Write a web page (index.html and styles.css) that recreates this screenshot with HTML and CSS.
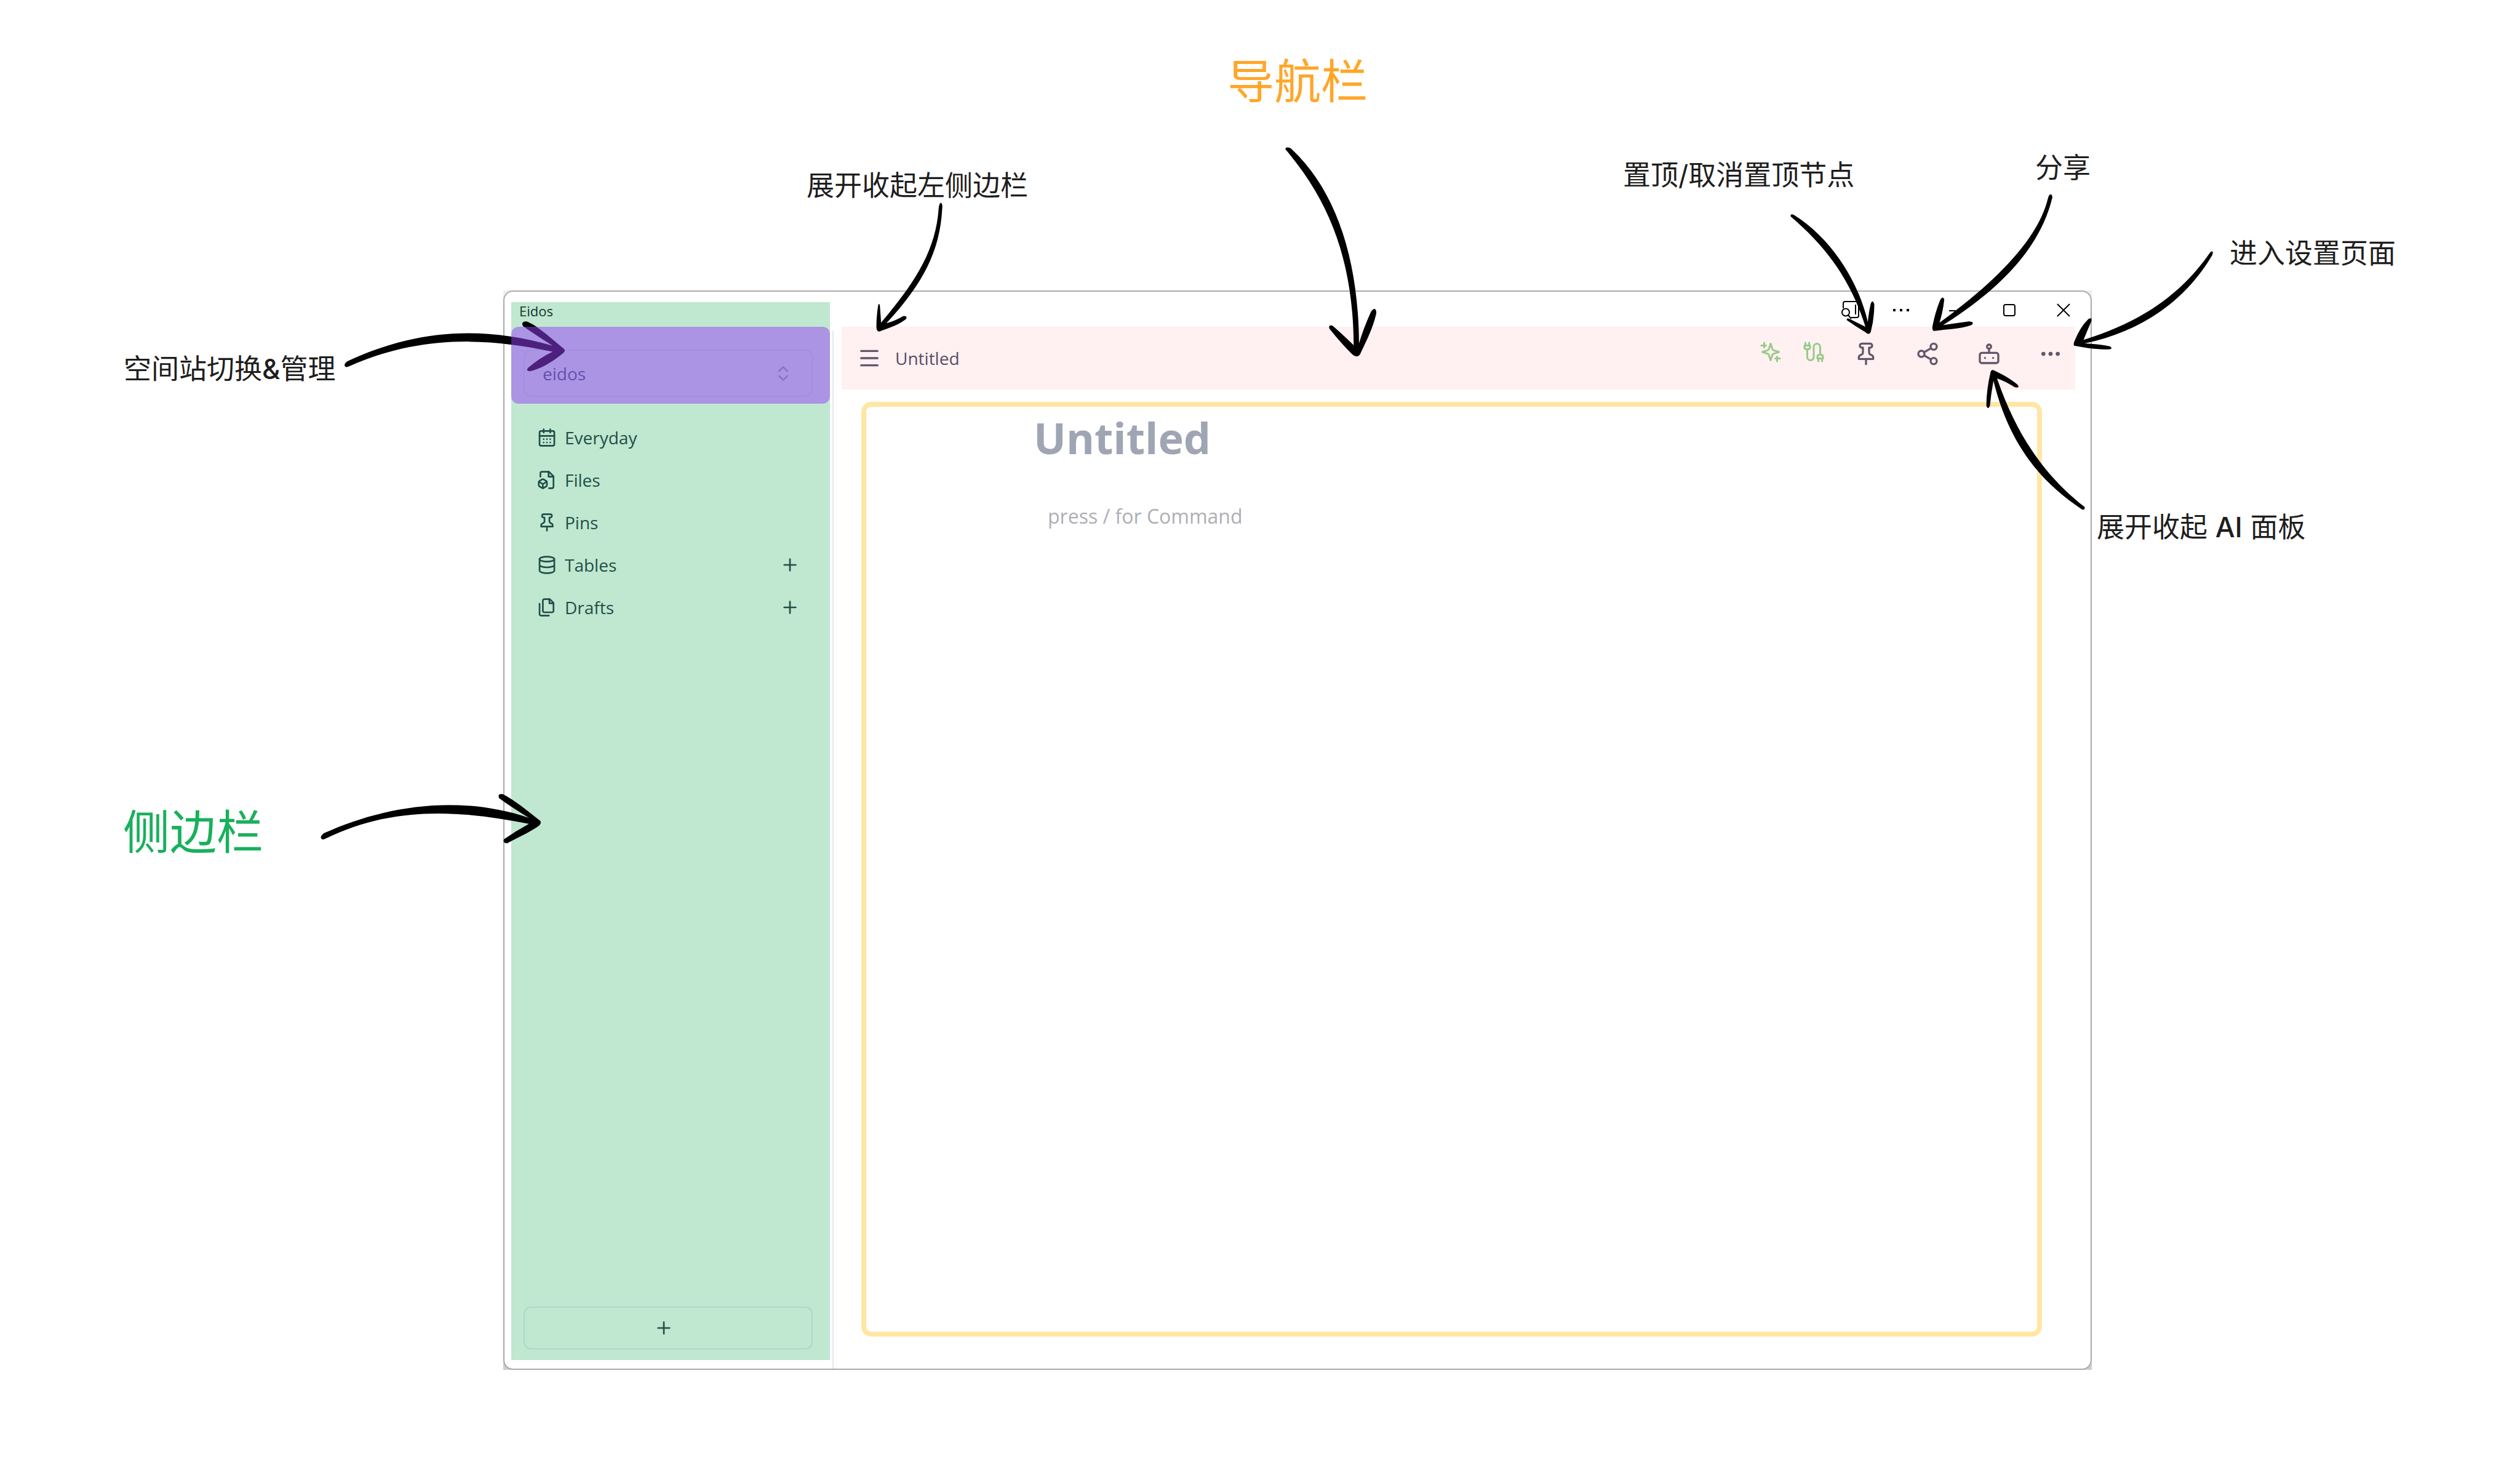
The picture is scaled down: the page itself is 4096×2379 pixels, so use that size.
FILE: index.html
```html
<!DOCTYPE html>
<html lang="zh-CN">
<head>
<meta charset="utf-8">
<title>Eidos</title>
<link rel="stylesheet" href="styles.css">
</head>
<body>
<div class="canvas">
  <div class="frame">
    <div class="window">
      <aside class="sidebar">
        <div class="app-name">Eidos</div>
        <div class="switcher">
          <button class="space-select" type="button">
            <span>eidos</span>
            <svg class="icon" viewBox="0 0 24 24"><path d="m7 15 5 5 5-5M7 9l5-5 5 5"/></svg>
          </button>
        </div>
        <nav class="menu">
          <div class="menu-row">
            <a class="menu-link" href="#everyday"><svg class="icon" viewBox="0 0 24 24"><rect x="3" y="4" width="18" height="18" rx="2"/><path d="M16 2v4M8 2v4M3 10h18M8 14h.01M12 14h.01M16 14h.01M8 18h.01M12 18h.01M16 18h.01"/></svg>Everyday</a>
          </div>
          <div class="menu-row">
            <a class="menu-link" href="#files"><svg class="icon" viewBox="0 0 24 24"><path d="M14.500 22H18a2 2 0 0 0 2-2V7.500L14.500 2H6a2 2 0 0 0-2 2v4"/><path d="M14 2v6h6"/><path d="M2.970 13.120c-.6.36-.97 1.020-.97 1.740v3.280c0 .72.37 1.380.97 1.740l3 1.830c.63.39 1.430.39 2.060 0l3-1.830c.6-.36.97-1.020.97-1.740v-3.280c0-.72-.37-1.380-.97-1.740l-3-1.830a1.970 1.970 0 0 0-2.060 0l-3 1.830Z"/><path d="m7 17-4.740-2.850M7 17l4.740-2.850M7 17v5"/></svg>Files</a>
          </div>
          <div class="menu-row">
            <a class="menu-link" href="#pins"><svg class="icon" viewBox="0 0 24 24"><path d="M12 17v5M5 17h14v-1.760a2 2 0 0 0-1.110-1.790l-1.780-.9A2 2 0 0 1 15 10.760V6h1a2 2 0 0 0 0-4H8a2 2 0 0 0 0 4h1v4.760a2 2 0 0 1-1.110 1.790l-1.780.9A2 2 0 0 0 5 15.240Z"/></svg>Pins</a>
          </div>
          <div class="menu-row">
            <a class="menu-link" href="#tables"><svg class="icon" viewBox="0 0 24 24"><ellipse cx="12" cy="5" rx="9" ry="3"/><path d="M3 5v14a9 3 0 0 0 18 0V5M3 12a9 3 0 0 0 18 0"/></svg>Tables</a>
            <button class="add" type="button" aria-label="Add table"><svg class="icon" viewBox="0 0 24 24"><path d="M5 12h14M12 5v14"/></svg></button>
          </div>
          <div class="menu-row">
            <a class="menu-link" href="#drafts"><svg class="icon" viewBox="0 0 24 24"><path d="M15.500 2H8.600c-.4 0-.8.2-1.100.5-.3.3-.5.7-.5 1.100v12.800c0 .4.2.8.5 1.100.3.3.7.5 1.100.5h9.800c.4 0 .8-.2 1.100-.5.3-.3.5-.7.5-1.100V6.500L15.500 2z"/><path d="M3 7.600v12.800c0 .4.2.8.5 1.100.3.3.7.5 1.100.5h9.800M15 2v5h5"/></svg>Drafts</a>
            <button class="add" type="button" aria-label="Add draft"><svg class="icon" viewBox="0 0 24 24"><path d="M5 12h14M12 5v14"/></svg></button>
          </div>
        </nav>
        <button class="new-node" type="button" aria-label="New"><svg class="icon" viewBox="0 0 24 24"><path d="M5 12h14M12 5v14"/></svg></button>
      </aside>
      <div class="divider"></div>
      <main class="main">
        <div class="titlebar">
          <button class="win-btn win-btn-search" type="button" aria-label="Search"><svg viewBox="0 0 30 30"><path d="M3 12V4a3 3 0 0 1 3-3h19a3 3 0 0 1 3 3v20a3 3 0 0 1-3 3h-9M23 6v16"/><circle cx="7" cy="18.500" r="6"/><path d="m11 23 5 6"/></svg></button>
          <button class="win-btn" type="button" aria-label="More"><svg viewBox="0 0 30 30"><path class="solid" d="M2 13h4v4H2zM13 13h4v4h-4zM24 13h4v4h-4z"/></svg></button>
          <button class="win-btn" type="button" aria-label="Minimize"><svg viewBox="0 0 30 30"><path d="M5 16h20"/></svg></button>
          <button class="win-btn" type="button" aria-label="Maximize"><svg viewBox="0 0 30 30"><rect x="6" y="6" width="18" height="18" rx="3"/></svg></button>
          <button class="win-btn" type="button" aria-label="Close"><svg viewBox="0 0 30 30"><path d="m5 5 20 20M25 5 5 25"/></svg></button>
        </div>
        <header class="navbar">
          <button class="nav-btn" type="button" aria-label="Toggle sidebar"><svg class="icon" viewBox="0 0 24 24"><path d="M4 5h16M4 12h16M4 19h16"/></svg></button>
          <span class="crumb">Untitled</span>
          <div class="actions">
            <button class="status-btn" type="button" aria-label="AI"><svg class="icon" viewBox="0 0 24 24"><path d="m12 3-1.912 5.813a2 2 0 0 1-1.275 1.275L3 12l5.813 1.912a2 2 0 0 1 1.275 1.275L12 21l1.912-5.813a2 2 0 0 1 1.275-1.275L21 12l-5.813-1.912a2 2 0 0 1-1.275-1.275L12 3ZM5 2v5M19 17v5M2 5h5M17 19h5"/></svg></button>
            <button class="status-btn" type="button" aria-label="Connection"><svg class="icon" viewBox="0 0 24 24"><path d="M4 9a2 2 0 0 1-2-2V5h6v2a2 2 0 0 1-2 2ZM3 5V2M7 5V2M19 15V6.500a3.500 3.500 0 0 0-7 0v11a3.500 3.500 0 0 1-7 0V9M17 22v-3M21 22v-3M22 19h-6v-2a2 2 0 0 1 2-2h2a2 2 0 0 1 2 2Z"/></svg></button>
            <button class="nav-btn" type="button" aria-label="Pin"><svg class="icon" viewBox="0 0 24 24"><path d="M12 17v5M5 17h14v-1.760a2 2 0 0 0-1.110-1.790l-1.780-.9A2 2 0 0 1 15 10.760V6h1a2 2 0 0 0 0-4H8a2 2 0 0 0 0 4h1v4.760a2 2 0 0 1-1.110 1.790l-1.780.9A2 2 0 0 0 5 15.240Z"/></svg></button>
            <button class="nav-btn" type="button" aria-label="Share"><svg class="icon" viewBox="0 0 24 24"><circle cx="18" cy="5" r="3"/><circle cx="6" cy="12" r="3"/><circle cx="18" cy="19" r="3"/><path d="m8.590 13.510 6.830 3.980M15.410 6.510l-6.820 3.980"/></svg></button>
            <button class="nav-btn" type="button" aria-label="AI panel"><svg class="icon" viewBox="0 0 24 24"><rect x="3" y="11" width="18" height="10" rx="2"/><circle cx="12" cy="5" r="2"/><path d="M12 7v4M8 16h.01M16 16h.01"/></svg></button>
            <button class="nav-btn" type="button" aria-label="Settings"><svg class="icon" viewBox="0 0 24 24"><circle cx="12" cy="12" r="1"/><circle cx="19" cy="12" r="1"/><circle cx="5" cy="12" r="1"/></svg></button>
          </div>
        </header>
        <section class="editor">
          <h1 class="doc-title">Untitled</h1>
          <textarea class="doc-body" rows="1" aria-label="Document body" placeholder="press / for Command"></textarea>
        </section>
      </main>
    </div>
  </div>

  <svg class="arrows" viewBox="0 0 4250 2468" aria-hidden="true">
    <path d="M2168 252C2167 248 2173 247 2178 251C2250 318 2291 430 2292 579Q2299 555 2312 526C2317 518 2322 520 2321 529C2316 552 2304 576 2294 597Q2289 605 2280 597Q2262 579 2242 554Q2240 547 2247 549Q2260 560 2283 582C2282 440 2243 340 2168 252Z"/>
    <path d="M1587 342Q1590 344 1589 352C1585 430 1550 485 1495 545Q1510 541 1523 533Q1531 532 1528 538C1517 547 1500 553 1483 559Q1478 559 1478 550Q1478 534 1481 515Q1483 509 1484 516L1486 544C1540 480 1578 425 1583 352Q1584 342 1587 342Z"/>
    <path d="M3020 365Q3019 360 3025 362C3090 402 3136 478 3150 543Q3152 525 3155 512Q3158 504 3161 513Q3161 538 3155 560Q3152 566 3146 560Q3129 550 3115 540Q3113 535 3120 538L3146 551C3122 474 3082 418 3020 365Z"/>
    <path d="M3459 328Q3462 329 3461 334C3440 420 3370 490 3277 548Q3299 545 3321 542Q3331 543 3325 548C3305 555 3282 555 3262 558Q3257 557 3260 546Q3264 526 3272 506Q3277 498 3279 505Q3277 525 3271 544C3362 478 3437 405 3454 334Q3456 327 3459 328Z"/>
    <path d="M3731 424Q3733 424 3731 430C3690 500 3620 557 3516 579Q3540 580 3558 584Q3565 588 3556 589C3535 590 3515 586 3498 583Q3496 580 3500 572Q3508 552 3522 538Q3529 534 3527 542Q3520 558 3514 573C3605 545 3675 500 3725 429Q3729 423 3731 424Z"/>
    <path d="M3510 858Q3516 862 3516 855C3445 800 3400 730 3368 638Q3381 642 3398 653Q3408 655 3402 648C3390 638 3375 630 3362 624Q3358 623 3357 628Q3350 658 3350 684Q3353 692 3356 684Q3358 663 3362 642C3385 735 3430 805 3510 858Z"/>
    <path d="M582 618Q579 614 586 609C690 561 800 545 932 583Q905 566 882 550Q878 542 888 542C905 548 930 571 951 588Q955 592 949 596C928 613 910 622 894 626Q885 625 892 619Q911 603 932 593C820 569 710 565 590 617Q584 620 582 618Z"/>
    <path d="M542 1414Q539 1411 546 1405C645 1360 770 1338 892 1379Q861 1360 842 1346Q838 1338 848 1339C868 1349 891 1368 911 1384Q914 1388 908 1393C890 1405 872 1413 855 1422Q847 1421 850 1415Q870 1401 892 1389C780 1367 665 1357 549 1414Q544 1417 542 1414Z"/>
  </svg>

  <p class="note note-lg note-navbar">导航栏</p>
  <p class="note note-lg note-sidebar">侧边栏</p>
  <p class="note note-space">空间站切换<span class="latin">&amp;</span>管理</p>
  <p class="note note-toggle">展开收起左侧边栏</p>
  <p class="note note-pin">置顶/取消置顶节点</p>
  <p class="note note-share">分享</p>
  <p class="note note-settings">进入设置页面</p>
  <p class="note note-ai">展开收起 <span class="latin">AI</span> 面板</p>
</div>
</body>
</html>
```
FILE: styles.css
```css
* { box-sizing: border-box; }

body {
  margin: 0;
  background: #fff;
  font-family: "Open Sans", "Noto Sans", "Noto Sans CJK SC", sans-serif;
}

button {
  margin: 0;
  padding: 0;
  border: 0;
  background: none;
  color: inherit;
  font: inherit;
}

.icon {
  display: block;
  width: 32px;
  height: 32px;
  flex: none;
  fill: none;
  stroke: currentColor;
  stroke-width: 2;
  stroke-linecap: round;
  stroke-linejoin: round;
}

.canvas {
  position: relative;
  display: grid;
  grid-template-columns: 818fr 2582fr 696fr;
  grid-template-rows: 472fr 1754fr 153fr;
  min-height: 100vh;
}

/* App window */

.frame {
  grid-area: 2 / 2;
  display: flex;
  background: linear-gradient(#eee, #ccc);
}

.window {
  flex: 1;
  display: flex;
  border: 2px solid #aaa;
  border-radius: 16px;
  background: #fff;
  padding-left: 11px;
}

.sidebar {
  display: flex;
  flex-direction: column;
  width: 518px;
  margin: 17px 0 14px;
  background: #c0e7d0;
  color: #1f4f47;
}

.app-name {
  height: 40px;
  padding-left: 13px;
  color: #14352a;
  font-size: 22px;
  line-height: 28px;
}

.switcher {
  position: relative;
  padding: 37px 28px 11px 20px;
}

/* Purple highlight, drawn over the arrow that points at the switcher */
.switcher::after {
  content: "";
  position: absolute;
  inset: 0;
  z-index: 2;
  border-radius: 12px;
  background: rgba(152, 66, 250, 0.5);
  pointer-events: none;
}

.space-select {
  display: flex;
  align-items: center;
  justify-content: space-between;
  width: 100%;
  height: 77px;
  padding: 0 30px 0 29px;
  border: 2px solid #b0dac8;
  border-radius: 12px;
  color: #2e5e62;
  font-size: 28px;
}

.space-select .icon { color: #7ca28e; }

.menu { margin-top: 20px; }

.menu-row {
  display: flex;
  align-items: center;
  height: 69px;
  padding: 0 49px 0 42px;
}

.menu-link {
  flex: 1;
  display: flex;
  align-items: center;
  gap: 13px;
  color: inherit;
  font-size: 28px;
  text-decoration: none;
}

.new-node {
  display: flex;
  align-items: center;
  justify-content: center;
  height: 70px;
  margin: auto 28px 17px 20px;
  padding-right: 14px;
  border: 2px solid #aed8c6;
  border-radius: 12px;
}

.divider {
  width: 2px;
  margin: 63px 13px 0 4px;
  background: #e2e8f0;
}

.main {
  flex: 1;
  display: flex;
  flex-direction: column;
}

.titlebar {
  display: flex;
  justify-content: flex-end;
  height: 57px;
  padding-top: 3px;
}

.win-btn {
  display: flex;
  align-items: center;
  justify-content: center;
  width: 88px;
}

.win-btn-search { width: 76px; }

.win-btn svg {
  width: 30px;
  height: 30px;
  fill: none;
  stroke: #000;
  stroke-width: 2;
}

.win-btn .solid {
  fill: #000;
  stroke: none;
}

.navbar {
  display: flex;
  align-items: center;
  height: 102px;
  margin-right: 25px;
  padding: 0 20px 0 25px;
  background: #fff0f1;
  color: #64566a;
}

.nav-btn .icon {
  width: 40px;
  height: 40px;
}

.crumb {
  margin-left: 22px;
  color: #574d63;
  font-size: 28px;
}

.actions {
  display: flex;
  align-items: center;
  gap: 60px;
  margin-left: auto;
  padding-bottom: 14px;
}

.status-btn {
  margin-right: -13px;
  padding: 0 0 6px;
  color: #97ca87;
}

.status-btn + .status-btn { margin: 0 -13px 0 -13px; }

.status-btn .icon {
  width: 36px;
  height: 36px;
}

.editor {
  flex: 1;
  display: flex;
  flex-direction: column;
  align-items: flex-start;
  margin: 20px 79px 52px 32px;
  padding: 0 272px;
  border: 8px solid #ffe7a3;
  border-radius: 16px;
}

.doc-title {
  margin: 0;
  color: #9fa5b3;
  font-size: 70px;
  line-height: 100px;
}

.doc-body {
  width: 100%;
  margin-top: 50px;
  padding: 0 0 0 23px;
  border: 0;
  background: none;
  font: inherit;
  font-size: 32px;
  line-height: 56px;
  resize: none;
  outline: none;
}

.doc-body::placeholder { color: #aeaeb4; }

/* Annotations */

.arrows {
  position: absolute;
  inset: 0;
  z-index: 1;
  width: 100%;
  pointer-events: none;
}

.note {
  position: absolute;
  margin: 0;
  color: #1e1e1e;
  font-family: Inter, "Noto Sans CJK SC", sans-serif;
  font-size: 45px;
  line-height: 60px;
  white-space: nowrap;
}

.note-lg {
  font-size: 76px;
  line-height: 100px;
}

.latin { font-weight: 500; }

.note-navbar { left: 1995px; top: 82px; color: #ffa629; }
.note-sidebar { left: 200px; top: 1302px; color: #18b05c; }
.note-space { left: 201px; top: 570px; }
.note-toggle { left: 1311px; top: 272px; }
.note-pin { left: 2638px; top: 255px; }
.note-share { left: 3308px; top: 243px; }
.note-settings { left: 3624px; top: 382px; }
.note-ai { left: 3408px; top: 827px; }
```
